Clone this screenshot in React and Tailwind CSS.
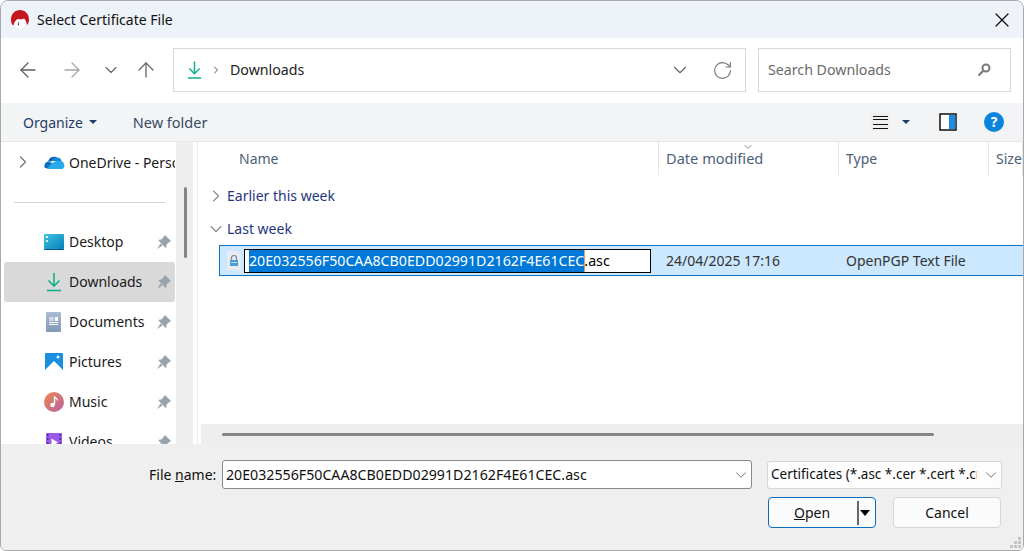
import React from "react";
import { ArrowLeft, ArrowRight, ArrowUp, ChevronDown, ChevronRight, RotateCw, X } from "lucide-react";

const DownloadIcon = ({ className }) => (
  <svg className={className} viewBox="0 0 16 20" fill="none" stroke="#14b08c" strokeWidth="1.6">
    <path d="M8 1v12.500M2.500 8.500 8 14l5.500-5.500" />
    <path d="M1 18.500h14" />
  </svg>
);

const AppLogo = () => (
  <svg className="ml-[1px] mr-[1px] h-[20px] w-[18px] shrink-0" viewBox="0 0 18 20">
    <ellipse cx="9" cy="11.500" rx="7" ry="8.500" fill="#ffffff" stroke="#e4dcdc" strokeWidth="0.500" />
    <path d="M0 9.500C0 4 4 0 9 0s9 4 9 9.500c0 2.500-.7 4.500-2 5.500-.6-3-1.500-5.500-3-6.500-2 1-5 1-6.500.5C5 10 3 12 2.500 15.500 1 15 0 12.500 0 9.500z" fill="#c4161c" />
    <path d="M8 11 6.500 15.500 8 15z" fill="#30354a" />
  </svg>
);

const CloudIcon = () => (
  <svg className="h-[14px] w-[21px]" viewBox="0 0 21 14">
    <path d="M4 6.500C5 2.500 10 0 13.500 3c-3 .4-5 2-5.500 3.500z" fill="#0b63b5" />
    <path d="M8 6c1-3 5-4.500 8-2.500 1 .7 1.300 1.500 1.500 2.500z" fill="#1186d8" />
    <path d="M1 13c-1.500-2-.5-6 3.500-6.500L10 9l-5 4.500z" fill="#0c6fc4" />
    <path d="M3 14c1-2 4-5 6-6.500 3-2 8-2.500 10-.5 2 2.500 1.800 5.500-.5 7z" fill="#29a8ea" />
  </svg>
);

const DesktopIcon = () => (
  <svg className="h-[16px] w-[20px]" viewBox="0 0 20 16">
    <defs>
      <linearGradient id="desk" x1="0" y1="0" x2="1" y2="1">
        <stop offset="0" stopColor="#3cc4e4" />
        <stop offset="1" stopColor="#0b7fb8" />
      </linearGradient>
    </defs>
    <rect width="20" height="15" rx="1" fill="url(#desk)" />
    <rect x="2" y="2" width="2" height="2" fill="#fff" />
    <rect x="2" y="6" width="2" height="2" fill="#d5f2fa" />
    <rect y="15" width="20" height="1" fill="#075f8e" />
  </svg>
);

const DocumentIcon = () => (
  <svg className="h-[20px] w-[15px]" viewBox="0 0 15 20">
    <defs>
      <linearGradient id="doc" x1="0" y1="0" x2="0" y2="1">
        <stop offset="0" stopColor="#a9bdd4" />
        <stop offset="1" stopColor="#8198b6" />
      </linearGradient>
    </defs>
    <rect width="15" height="20" rx="1" fill="url(#doc)" />
    <path d="M3 6h5M3 8h5M3 10.500h9M3 12.500h9" stroke="#fff" strokeWidth="1" />
    <rect x="9" y="5" width="3" height="4" fill="#fff" />
  </svg>
);

const PicturesIcon = () => (
  <svg className="h-[18px] w-[18px]" viewBox="0 0 18 18">
    <rect width="18" height="18" rx="1" fill="#1a8fe0" />
    <circle cx="13" cy="4" r="1.500" fill="#fff" />
    <path d="M0 17 9 8l9 9v1H0z" fill="#fff" />
  </svg>
);

const MusicIcon = () => (
  <svg className="h-[20px] w-[20px]" viewBox="0 0 20 20">
    <defs>
      <linearGradient id="mus" x1="0" y1="0" x2="1" y2="1">
        <stop offset="0" stopColor="#ee8a4c" />
        <stop offset="1" stopColor="#b75fa6" />
      </linearGradient>
    </defs>
    <circle cx="10" cy="10" r="10" fill="url(#mus)" />
    <path d="M10.500 4.500v8" stroke="#fff" strokeWidth="1.400" />
    <path d="M10.500 4.500c1 2 3 2 3 4" stroke="#fff" strokeWidth="1.200" fill="none" />
    <circle cx="8.500" cy="13" r="2.200" fill="#fff" />
  </svg>
);

const VideosIcon = () => (
  <svg className="h-[18px] w-[16px]" viewBox="0 0 16 18">
    <rect width="16" height="18" rx="1" fill="#9a5be8" />
    <path d="M1 2h1.500M1 6h1.500M1 10h1.500M1 14h1.500M13.500 2H15M13.500 6H15M13.500 10H15M13.500 14H15" stroke="#3a1d7a" strokeWidth="1.500" />
    <path d="M5.500 5.500 12 9.500l-6.500 4z" fill="#fff" />
  </svg>
);

const PinIcon = () => (
  <svg className="h-[14px] w-[14px] shrink-0" viewBox="0 0 14 14" fill="#98a3ab">
    <path d="M8 0 14 6 12.500 7 9.500 9.500 9.500 12 8.500 13 1.500 5.500 2.500 4.500 4.500 4.500 7 1.500z" />
    <path d="M3.500 8.500 0 14 5.500 10.500z" />
  </svg>
);

const FileLockIcon = () => (
  <svg className="h-[19px] w-[14px] shrink-0" viewBox="0 0 14 19">
    <path d="M0 0h10l4 4v15H0z" fill="#e6ecf2" />
    <path d="M4.500 9V7a2.500 2.500 0 0 1 5 0v2" stroke="#7b8794" strokeWidth="1.200" fill="none" />
    <rect x="3" y="9" width="8" height="6" fill="#4a9ed6" />
    <rect x="4" y="11" width="6" height="1" fill="#bfe0f4" />
  </svg>
);

const SearchIcon = () => (
  <svg className="h-[14px] w-[14px]" viewBox="0 0 14 14" fill="none" stroke="#7a7a7a">
    <circle cx="9" cy="5" r="3.500" strokeWidth="2" />
    <path d="M6.500 7.500 1.500 12.500" strokeWidth="2.200" />
  </svg>
);

const PreviewIcon = () => (
  <svg className="h-[18px] w-[18px]" viewBox="0 0 18 18">
    <rect x="1" y="1" width="16" height="16" fill="#fff" stroke="#111" strokeWidth="1.500" />
    <rect x="10" y="2" width="6.300" height="14" fill="#1d8ce0" />
  </svg>
);

const HelpIcon = () => (
  <div className="flex h-[20px] w-[20px] items-center justify-center rounded-full bg-[#0a84dc] text-[14px] font-bold leading-none text-white">
    ?
  </div>
);

const Caret = () => (
  <span className="inline-block h-0 w-0 border-x-[4px] border-t-[4px] border-x-transparent border-t-[#1f3b66]" />
);

const quickAccess = [
  { name: "Desktop", icon: <DesktopIcon /> },
  { name: "Downloads", icon: <DownloadIcon className="h-[20px] w-[16px]" />, active: true },
  { name: "Documents", icon: <DocumentIcon /> },
  { name: "Pictures", icon: <PicturesIcon /> },
  { name: "Music", icon: <MusicIcon /> },
  { name: "Videos", icon: <VideosIcon /> },
];

const columns = [
  { label: "Name", width: "w-[461px]", pad: "pl-[41px]" },
  { label: "Date modified", width: "w-[180px]", pad: "pl-[7px] text-[14.6px]" },
  { label: "Type", width: "w-[150px]", pad: "pl-[7px]" },
  { label: "Size", width: "w-[34px]", pad: "pl-[7px] overflow-hidden" },
];

export default function App() {
  return (
    <div className="relative flex h-[551px] w-[1024px] flex-col overflow-hidden rounded-t-lg rounded-b-md border border-[#a9a9a9] bg-white font-['Noto_Sans',sans-serif] text-[14px] text-[#1a1a1a]">
      <div className="flex h-[37px] shrink-0 items-center bg-[#eef2f9] pl-[9px]">
        <AppLogo />
        <span className="ml-[7px] text-[14px] text-[#111]">Select Certificate File</span>
        <X className="ml-auto mr-[9px] h-[24px] w-[24px] text-[#111]" strokeWidth={1.200} />
      </div>

      <div className="flex h-[65px] shrink-0 items-center bg-white pb-[1px] pl-[15px] pr-[12px]">
        <ArrowLeft className="h-[24px] w-[24px] text-[#5f5f5f]" strokeWidth={1.300} />
        <ArrowRight className="ml-[20px] h-[24px] w-[24px] text-[#a8a8a8]" strokeWidth={1.300} />
        <ChevronDown className="ml-[17px] h-[20px] w-[20px] text-[#666]" strokeWidth={1.400} />
        <ArrowUp className="ml-[13px] h-[24px] w-[24px] text-[#666]" strokeWidth={1.300} />
        <div className="ml-[15px] flex h-[44px] w-[573px] items-center border border-[#d9d9d9] pl-[13px] pr-[12px]">
          <DownloadIcon className="h-[20px] w-[15px]" />
          <ChevronRight className="ml-[8px] h-[12px] w-[12px] text-[#555]" strokeWidth={2} />
          <span className="ml-[8px] text-[14.2px] text-[#222]">Downloads</span>
          <ChevronDown className="ml-auto h-[22px] w-[22px] text-[#666]" strokeWidth={1.200} />
          <RotateCw className="ml-[21px] h-[21px] w-[21px] text-[#777]" strokeWidth={1.300} />
        </div>
        <div className="ml-[12px] flex h-[44px] flex-1 items-center justify-between border border-[#d9d9d9] pl-[9px] pr-[19px] text-[14.2px] text-[#6b6b6b]">
          <span>Search Downloads</span>
          <SearchIcon />
        </div>
      </div>

      <div className="flex h-[39px] shrink-0 items-center border-b border-[#e6e6e6] bg-[#f3f4f6] pl-[22px] pr-[19px] text-[#1f3b66]">
        <span className="text-[14px]">Organize</span>
        <span className="ml-[6px] flex items-center">
          <Caret />
        </span>
        <span className="ml-[36px] mt-[2px] text-[14.5px] text-[#3a4a64]">New folder</span>
        <div className="ml-auto flex items-center">
          <div className="flex h-[18px] w-[20px] items-center justify-center bg-[#f0f0f0]">
            <div className="h-[13px] w-[15px] border-y border-[#111] py-[2.500px]">
              <div className="h-[6px] border-y border-[#111]" />
            </div>
          </div>
          <span className="ml-[12px] flex items-center">
            <Caret />
          </span>
          <span className="ml-[29px] flex">
            <PreviewIcon />
          </span>
          <span className="ml-[27px] flex">
            <HelpIcon />
          </span>
        </div>
      </div>

      <div className="flex min-h-0 flex-1">
        <div className="flex w-[192px] shrink-0">
          <div className="w-[175px] shrink-0 overflow-hidden pl-[3px] pr-[1px]">
            <div className="flex h-[40px] items-center">
              <ChevronRight className="ml-[9px] h-[20px] w-[20px] shrink-0 text-[#777]" strokeWidth={1.500} />
              <span className="ml-[11px] flex w-[21px] shrink-0 justify-center">
                <CloudIcon />
              </span>
              <span className="ml-[4px] w-[106px] overflow-hidden whitespace-nowrap text-[14px]">OneDrive - Personal</span>
            </div>
            <div className="flex h-[40px] items-center pl-[10px] pr-[10px]">
              <div className="h-px w-[151px] bg-[#d4d4d4]" />
            </div>
            {quickAccess.map((item) => (
              <div
                key={item.name}
                className={`flex h-[40px] items-center rounded-[3px] ${item.active ? "bg-[#d9d9d9]" : ""}`}
              >
                <span className="ml-[39px] flex w-[21px] justify-center">{item.icon}</span>
                <span className="ml-[5px] w-[88px] text-[14px] leading-none">{item.name}</span>
                <PinIcon />
              </div>
            ))}
          </div>
          <div className="flex-1 bg-[#eeeeee] pl-[8px] pt-[45px]">
            <div className="h-[71px] w-[3px] rounded-full bg-[#858585]" />
          </div>
        </div>

        <div className="ml-[4px] w-px bg-[#ececec]" />

        <div className="flex min-w-0 flex-1 flex-col pl-[3px]">
          <div className="relative -ml-[3px] flex h-[33px] shrink-0 text-[14px] text-[#4c607a]">
            {columns.map((col) => (
              <div key={col.label} className={`${col.width} ${col.pad} flex shrink-0 items-center border-r border-[#e5e5e5] last:border-r-0`}>
                <span className="whitespace-nowrap">{col.label}</span>
              </div>
            ))}
            <ChevronDown className="absolute left-[544px] top-[-1px] h-[12px] w-[12px] text-[#666]" strokeWidth={1.400} />
          </div>

          <div className="flex-1 overflow-hidden pl-[5px]">
            <div className="mt-[4px] flex h-[33px] items-center text-[14px] text-[#26367e]">
              <ChevronRight className="h-[20px] w-[20px] shrink-0 text-[#888]" strokeWidth={1.300} />
              <span className="ml-[1px]">Earlier this week</span>
            </div>
            <div className="flex h-[33px] items-center text-[14px] text-[#26367e]">
              <ChevronDown className="h-[20px] w-[20px] shrink-0 text-[#888]" strokeWidth={1.300} />
              <span className="ml-[1px]">Last week</span>
            </div>
            <div className="ml-[13px] flex h-[31px] items-center border-y border-l border-[#1273c4] bg-[#cce8ff] pl-[7px]">
              <FileLockIcon />
              <div className="ml-[3px] flex h-[24px] w-[407px] shrink-0 items-center border border-black bg-white pl-[4px] text-[14.2px] text-black">
                <span className="bg-[#0078d7] leading-[22px] text-white shadow-[1px_0_0_#e8a060]">20E032556F50CAA8CB0EDD02991D2162F4E61CEC</span>
                <span>.asc</span>
              </div>
              <span className="ml-[15px] w-[180px] shrink-0 text-[14px] text-[#333]">24/04/2025 17:16</span>
              <span className="whitespace-nowrap text-[14px] text-[#333]">OpenPGP Text File</span>
            </div>
          </div>

          <div className="flex h-[20px] shrink-0 items-center bg-[#eeeeee] pl-[21px]">
            <div className="h-[3px] w-[712px] rounded-full bg-[#858585]" />
          </div>
        </div>
      </div>

      <div className="flex h-[106px] shrink-0 flex-col bg-[#efefef] pl-[148px] pt-[16px]">
        <div className="flex items-center">
          <span className="w-[73px] whitespace-nowrap text-[14px] text-[#111]">
            File <span className="underline">n</span>ame:
          </span>
          <div className="flex h-[29px] w-[530px] items-center justify-between rounded-[3px] border border-[#8a8a8a] bg-white pl-[3px] pr-[1px]">
            <span className="text-[14.2px] text-[#111]">20E032556F50CAA8CB0EDD02991D2162F4E61CEC.asc</span>
            <ChevronDown className="h-[18px] w-[18px] text-[#666]" strokeWidth={1.200} />
          </div>
          <div className="ml-[15px] flex h-[28px] w-[235px] items-center justify-between rounded-[3px] border border-[#d6d6d6] bg-[#fdfdfd] pl-[3px] pr-[1px]">
            <span className="w-[206px] overflow-hidden whitespace-nowrap text-[13.5px] text-[#111]">Certificates (*.asc *.cer *.cert *.crt)</span>
            <ChevronDown className="h-[18px] w-[18px] text-[#666]" strokeWidth={1.200} />
          </div>
        </div>
        <div className="mt-[8px] flex">
          <div className="ml-[619px] flex h-[31px] w-[108px] items-center rounded-[4px] border border-[#0f6cbd] bg-[#fbfbfb] text-[14px] text-[#111]">
            <span className="w-[86px] text-center">
              <span className="underline">O</span>pen
            </span>
            <div className="ml-[2px] h-[24px] w-[2px] bg-[#666]" />
            <span className="ml-[1px] flex items-center">
              <span className="inline-block h-0 w-0 border-x-[5px] border-t-[6px] border-x-transparent border-t-black" />
            </span>
          </div>
          <div className="ml-[17px] flex h-[31px] w-[108px] items-center justify-center rounded-[4px] border border-[#d6d6d6] bg-[#fbfbfb] text-[14px] text-[#111]">
            Cancel
          </div>
        </div>
      </div>

      <svg className="absolute bottom-[2px] right-[2px] h-[11px] w-[11px]" viewBox="0 0 11 11" fill="#c4c4c4">
        <path d="M8 0h3v3H8zM4 4h3v3H4zM8 4h3v3H8zM0 8h3v3H0zM4 8h3v3H4zM8 8h3v3H8z" />
      </svg>
    </div>
  );
}
